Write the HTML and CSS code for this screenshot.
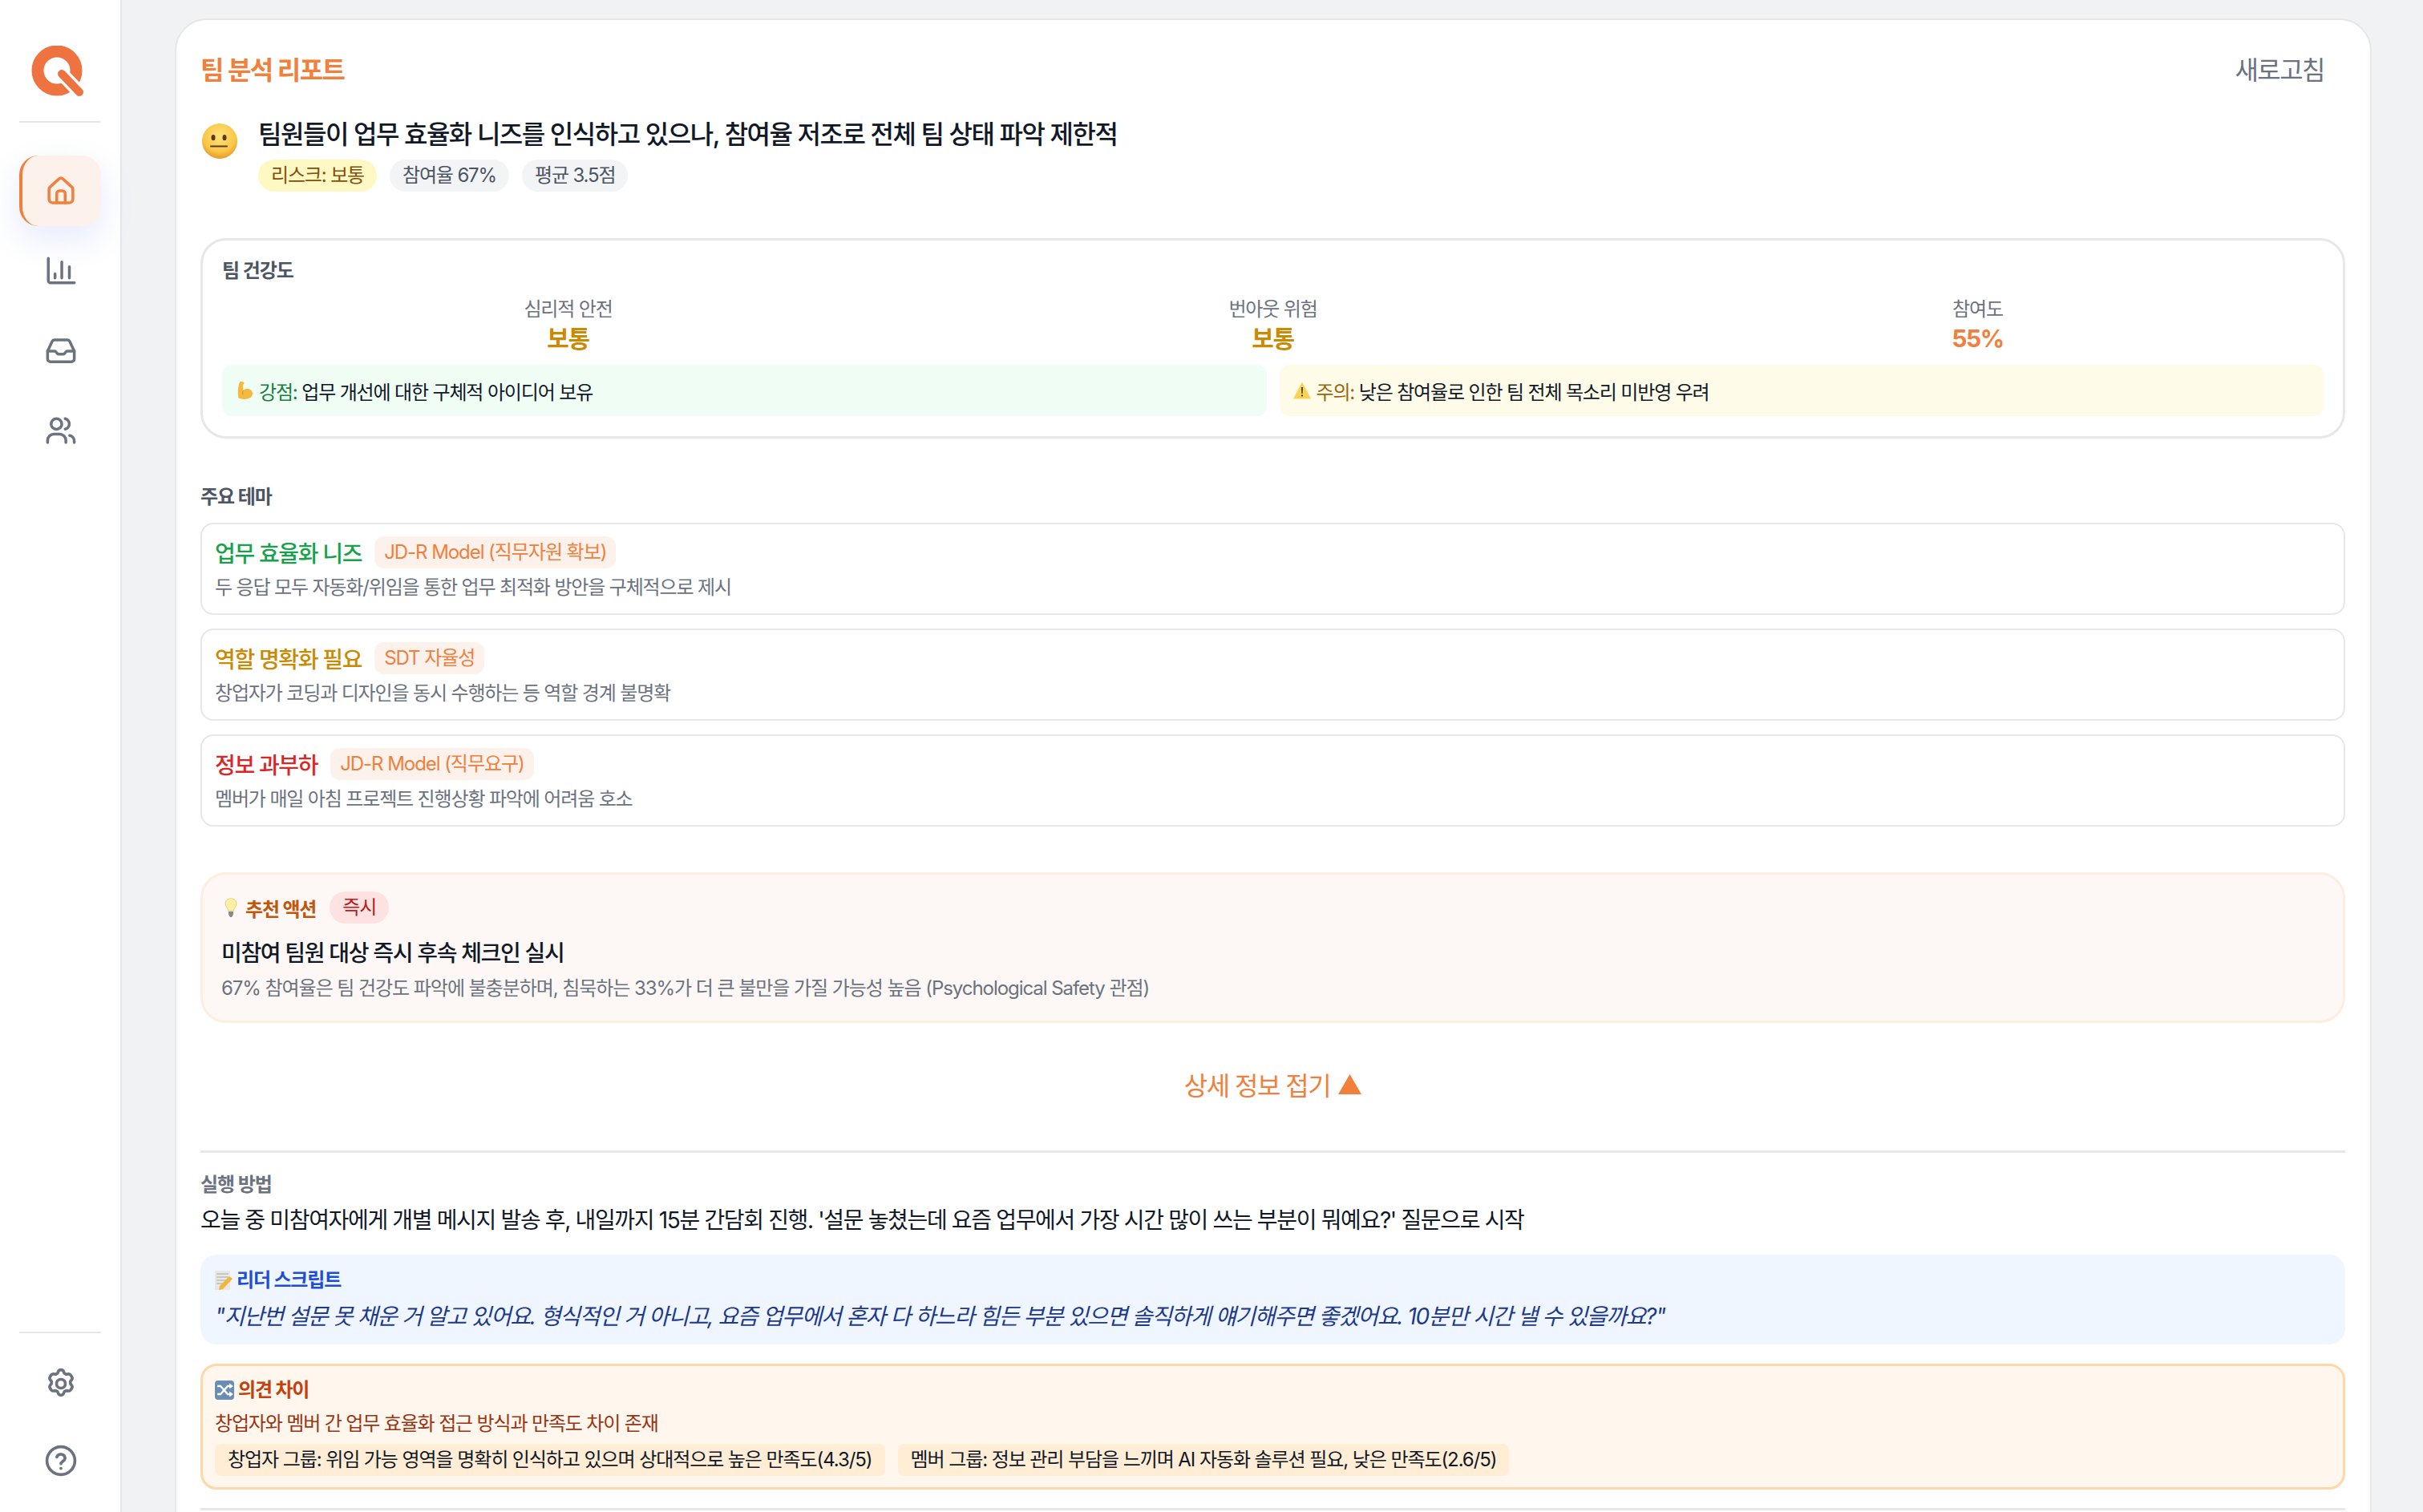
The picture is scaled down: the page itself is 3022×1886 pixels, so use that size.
FILE: index.html
```html
<!DOCTYPE html>
<html lang="ko">
<head>
    <meta charset="UTF-8">
    <meta name="viewport" content="width=device-width, initial-scale=1.0">
    <title>팀 분석 리포트</title>
    <link rel="stylesheet" href="styles.css">
</head>
<body>
    <aside class="sidebar">
        <div class="logo">
            <svg viewBox="0 0 66 64" width="66" height="64">
                <circle cx="32" cy="31" r="24" fill="none" stroke="#ef7340" stroke-width="15"/>
                <path d="M39 36 60 58" stroke="#fff" stroke-width="17" stroke-linecap="butt"/>
                <path d="M38 35 60 58" stroke="#ef7340" stroke-width="10" stroke-linecap="round"/>
            </svg>
        </div>
        <div class="side-line"></div>
        <nav class="side-nav">
            <a class="nav-item active">
                <svg viewBox="0 0 24 24" class="icon"><path d="M4 9.500 10.600 3.500a2 2 0 0 1 2.800 0L20 9.500a2 2 0 0 1 .5 1.400V18a2.500 2.500 0 0 1-2.500 2.500H6A2.500 2.500 0 0 1 3.500 18v-7.100a2 2 0 0 1 .5-1.400Z"/><path d="M9 20.500V14a2 2 0 0 1 2-2h2a2 2 0 0 1 2 2v6.500"/></svg>
            </a>
            <a class="nav-item">
                <svg viewBox="0 0 24 24" class="icon"><path d="M3 3V18.900a1.500 1.500 0 0 0 1.500 1.500H21.600"/><path d="M7.800 14V17M12.600 5.500V17M18 9V17"/></svg>
            </a>
            <a class="nav-item">
                <svg viewBox="0 0 24 24" class="icon"><path d="M7.500 4h9a2 2 0 0 1 1.800 1.100L21.500 12v5.500a2 2 0 0 1-2 2h-15a2 2 0 0 1-2-2V12l3.200-6.900a2 2 0 0 1 1.800-1.100Z"/><path d="M2.500 12h5a1 1 0 0 1 .8.400l1.200 1.400a1 1 0 0 0 .8.400h3.400a1 1 0 0 0 .8-.4l1.200-1.400a1 1 0 0 1 .8-.4h5"/></svg>
            </a>
            <a class="nav-item">
                <svg viewBox="0 0 24 24" class="icon"><circle cx="8.800" cy="6.800" r="3.800"/><path d="M2.500 20V18.500a4.500 4.500 0 0 1 4.500-4.500h4a4.500 4.500 0 0 1 4.500 4.500V20"/><path d="M15 3a3.800 3.800 0 0 1 0 7.400"/><path d="M18.200 15a4 4 0 0 1 3.300 4V20"/></svg>
            </a>
        </nav>
        <div class="side-bottom">
            <div class="side-line"></div>
            <a class="nav-sm">
                <svg viewBox="0 0 24 24" class="icon"><path d="M12 2.500c.8 0 1.500.5 1.800 1.200l.5 1.200 1.300.7 1.300-.2c.8-.1 1.500.2 1.900.9l.6 1c.4.700.3 1.500-.2 2.100l-.8 1v1.500l.8 1c.5.600.6 1.400.2 2.100l-.6 1c-.4.700-1.100 1-1.900.9l-1.300-.2-1.300.7-.5 1.200c-.3.700-1 1.200-1.800 1.200s-1.500-.5-1.800-1.200l-.5-1.200-1.300-.7-1.300.2c-.8.1-1.500-.2-1.900-.9l-.6-1c-.4-.7-.3-1.500.2-2.100l.8-1v-1.500l-.8-1c-.5-.6-.6-1.400-.2-2.100l.6-1c.4-.7 1.100-1 1.900-.9l1.300.2 1.300-.7.5-1.200c.3-.7 1-1.200 1.800-1.200Z"/><circle cx="12" cy="12" r="3"/></svg>
            </a>
            <a class="nav-sm">
                <svg viewBox="0 0 24 24" class="icon"><circle cx="12" cy="12" r="9.500"/><path d="M9.200 9.500a2.900 2.900 0 0 1 5.600.8c0 1.900-2.800 2.400-2.800 3.700"/><path d="M12 17.200v.1"/></svg>
            </a>
        </div>
    </aside>

    <main class="main">
        <section class="card">
            <header class="card-head">
                <h1 class="page-title">팀 분석 리포트</h1>
                <button class="refresh">새로고침</button>
            </header>

            <div class="summary">
                <svg class="emoji-big" viewBox="0 0 44 44">
                    <defs>
                        <radialGradient id="face" cx="50%" cy="35%" r="65%">
                            <stop offset="0" stop-color="#ffe27a"/>
                            <stop offset="0.7" stop-color="#f8c746"/>
                            <stop offset="1" stop-color="#e59a28"/>
                        </radialGradient>
                    </defs>
                    <circle cx="22" cy="22" r="22" fill="url(#face)"/>
                    <ellipse cx="14" cy="17.700" rx="2.500" ry="3.600" fill="#5b3a1c"/>
                    <ellipse cx="28" cy="17.700" rx="2.500" ry="3.600" fill="#5b3a1c"/>
                    <rect x="10" y="27.500" width="22" height="2" rx="1" fill="#5b3a1c"/>
                </svg>
                <div class="summary-body">
                    <h2 class="headline">팀원들이 업무 효율화 니즈를 인식하고 있으나, 참여율 저조로 전체 팀 상태 파악 제한적</h2>
                    <div class="chips">
                        <span class="chip chip-risk">리스크: 보통</span>
                        <span class="chip">참여율 67%</span>
                        <span class="chip">평균 3.5점</span>
                    </div>
                </div>
            </div>

            <section class="health">
                <h3 class="health-title">팀 건강도</h3>
                <div class="stats">
                    <div class="stat"><div class="stat-label">심리적 안전</div><div class="stat-value yellow">보통</div></div>
                    <div class="stat"><div class="stat-label">번아웃 위험</div><div class="stat-value yellow">보통</div></div>
                    <div class="stat"><div class="stat-label">참여도</div><div class="stat-value orange">55%</div></div>
                </div>
                <div class="notes">
                    <div class="note note-good">
                        <svg class="emoji" viewBox="0 0 24 24"><path fill="#f4b93f" d="M6 1.500C8 .5 11 1 11.500 3L10 5.500 10.500 12C13 9.500 17 9.500 20 11.500 23 14 22.500 19 19.500 21 15 23.500 8 23.500 4.500 21.500 3 15 3.500 8 6 1.500Z"/><path fill="none" stroke="#d6902a" stroke-width="1" d="M10.500 12C9.500 14 9.500 16 10 17.500"/></svg>
                        <span><b>강점:</b> 업무 개선에 대한 구체적 아이디어 보유</span>
                    </div>
                    <div class="note note-warn">
                        <svg class="emoji" viewBox="0 0 24 24"><path fill="#fbd354" d="M12 1.500 23 22.500H1Z"/><path fill="#3b3b3b" d="M11 8h2l-.4 8h-1.200ZM11 17.500h2v2h-2Z"/></svg>
                        <span><b>주의:</b> 낮은 참여율로 인한 팀 전체 목소리 미반영 우려</span>
                    </div>
                </div>
            </section>

            <h3 class="section-label">주요 테마</h3>
            <div class="themes">
                <article class="theme">
                    <div class="theme-head"><span class="theme-name green">업무 효율화 니즈</span><span class="tag">JD-R Model (직무자원 확보)</span></div>
                    <p class="theme-desc">두 응답 모두 자동화/위임을 통한 업무 최적화 방안을 구체적으로 제시</p>
                </article>
                <article class="theme">
                    <div class="theme-head"><span class="theme-name yellow">역할 명확화 필요</span><span class="tag">SDT 자율성</span></div>
                    <p class="theme-desc">창업자가 코딩과 디자인을 동시 수행하는 등 역할 경계 불명확</p>
                </article>
                <article class="theme">
                    <div class="theme-head"><span class="theme-name red">정보 과부하</span><span class="tag">JD-R Model (직무요구)</span></div>
                    <p class="theme-desc">멤버가 매일 아침 프로젝트 진행상황 파악에 어려움 호소</p>
                </article>
            </div>

            <section class="action">
                <div class="action-head">
                    <svg class="emoji bulb" viewBox="0 0 16 24"><path fill="#fdf0a6" stroke="#e9cf72" d="M8 .7c4 0 7 3 7 6.500 0 3.500-3 5-4 9H5C4 12.200 1 10.700 1 7.200 1 3.700 4 .7 8 .7Z"/><path fill="#8a8a8a" d="M5 17h6v3.500L9 24H7l-2-3.500Z"/></svg>
                    <span class="action-label">추천 액션</span>
                    <span class="badge">즉시</span>
                </div>
                <h4 class="action-title">미참여 팀원 대상 즉시 후속 체크인 실시</h4>
                <p class="action-desc">67% 참여율은 팀 건강도 파악에 불충분하며, 침묵하는 33%가 더 큰 불만을 가질 가능성 높음 (Psychological Safety 관점)</p>
            </section>

            <button class="toggle">상세 정보 접기 <svg class="caret" viewBox="0 0 29 25"><path fill="#f0803c" d="M14.500 0 29 25H0Z"/></svg></button>

            <hr class="rule">

            <h3 class="how-label">실행 방법</h3>
            <p class="how-text">오늘 중 미참여자에게 개별 메시지 발송 후, 내일까지 15분 간담회 진행. '설문 놓쳤는데 요즘 업무에서 가장 시간 많이 쓰는 부분이 뭐예요?' 질문으로 시작</p>

            <section class="script">
                <div class="box-head blue">
                    <svg class="emoji memo" viewBox="0 0 22 24"><rect x="0" y="0" width="19" height="24" fill="#e8e8e4"/><path stroke="#a9a9a4" stroke-width="1" d="M2 4h15M2 8h15M2 12h12M2 16h8"/><path fill="#f2b63c" d="M18 7 22 10 10 23 5 24 6 19Z"/></svg>
                    리더 스크립트
                </div>
                <p class="script-quote">"지난번 설문 못 채운 거 알고 있어요. 형식적인 거 아니고, 요즘 업무에서 혼자 다 하느라 힘든 부분 있으면 솔직하게 얘기해주면 좋겠어요. 10분만 시간 낼 수 있을까요?"</p>
            </section>

            <section class="gap">
                <div class="box-head brown">
                    <svg class="emoji" viewBox="0 0 24 24"><rect width="24" height="24" rx="4" fill="#6a8db5"/><path fill="none" stroke="#fff" stroke-width="2.400" d="M3 7h4l9 10h3M3 17h4l9-10h3"/><path fill="#fff" d="M18 3.500 23 7l-5 3.500ZM18 13.500 23 17l-5 3.500Z"/></svg>
                    의견 차이
                </div>
                <p class="gap-desc">창업자와 멤버 간 업무 효율화 접근 방식과 만족도 차이 존재</p>
                <div class="gap-groups">
                    <span class="group">창업자 그룹: 위임 가능 영역을 명확히 인식하고 있으며 상대적으로 높은 만족도(4.3/5)</span>
                    <span class="group">멤버 그룹: 정보 관리 부담을 느끼며 AI 자동화 솔루션 필요, 낮은 만족도(2.6/5)</span>
                </div>
            </section>

            <hr class="rule rule-end">
        </section>
    </main>
</body>
</html>
```

FILE: styles.css
```css
* {
    box-sizing: border-box;
    letter-spacing: -0.048em;
}

html, body {
    height: 100%;
}

body {
    margin: 0;
    display: flex;
    height: 1886px;
    overflow: hidden;
    background: #f1f2f4;
    color: #111827;
    font-family: Inter, "Noto Sans CJK KR", "Noto Sans", sans-serif;
}

h1, h2, h3, h4, p {
    margin: 0;
}

/* sidebar */
.sidebar {
    width: 152px;
    flex-shrink: 0;
    background: #fff;
    border-right: 2px solid #e5e7eb;
    display: flex;
    flex-direction: column;
    align-items: center;
    padding: 57px 0 16px;
}

.logo {
    height: 62px;
    width: 102px;
    padding-left: 15px;
}

.side-line {
    width: 102px;
    height: 2px;
    background: #e5e7eb;
}

.logo + .side-line {
    margin-top: 32px;
}

.side-nav {
    margin-top: 41px;
    display: flex;
    flex-direction: column;
    gap: 12px;
}

.nav-item {
    width: 102px;
    height: 88px;
    display: flex;
    align-items: center;
    justify-content: center;
    border-radius: 24px;
    color: #6b7280;
}

.nav-item.active {
    background: #fdf1ec;
    color: #f0803c;
    border-left: 4px solid #f0803c;
    padding-right: 4px;
    box-shadow: 0 16px 40px rgba(99, 125, 240, 0.16);
}

.icon {
    width: 42px;
    height: 42px;
    margin-left: 2px;
    fill: none;
    stroke: currentColor;
    stroke-width: 2;
    stroke-linecap: round;
    stroke-linejoin: round;
}

.side-bottom {
    margin-top: auto;
    display: flex;
    flex-direction: column;
    align-items: center;
}

.nav-sm {
    width: 102px;
    height: 96px;
    display: flex;
    align-items: center;
    justify-content: center;
    color: #6b7280;
}

.nav-sm .icon {
    width: 44px;
    height: 44px;
}

.side-bottom .side-line {
    margin-bottom: 15px;
}

/* main card */
.main {
    flex: 1;
    padding: 23px 64px 0 66px;
    min-width: 0;
}

.card {
    background: #fff;
    border: 2px solid #e5e7eb;
    border-radius: 40px;
    padding: 0 31px 0 30px;
    height: 2000px;
}

.card-head {
    display: flex;
    justify-content: space-between;
    align-items: center;
    height: 72px;
    margin-top: 24px;
}

.page-title {
    font-size: 32px;
    font-weight: 700;
    color: #f0803c;
}

.refresh {
    background: none;
    border: none;
    font: inherit;
    font-size: 32px;
    color: #6b7280;
    padding: 0 26px 0 0;
}

.summary {
    display: flex;
    gap: 26px;
    margin-top: 25px;
}

.emoji-big {
    width: 44px;
    height: 44px;
    margin: 8px 0 0 2px;
    flex-shrink: 0;
}

.summary-body {
    display: flex;
    flex-direction: column;
}

.headline {
    font-size: 32px;
    line-height: 44px;
    font-weight: 500;
    letter-spacing: -0.046em;
}

.chips {
    display: flex;
    gap: 16px;
    margin-top: 9px;
}

.chip {
    height: 40px;
    line-height: 40px;
    padding: 0 16px;
    border-radius: 20px;
    background: #f3f4f6;
    color: #4b5563;
    font-size: 24px;
}

.chip-risk {
    background: #fef9c3;
    color: #854d0e;
}

/* health */
.health {
    margin-top: 58px;
    border: 3px solid #e5e7eb;
    border-radius: 32px;
    padding: 22px 24px 22px;
    height: 250px;
}

.health-title {
    font-size: 24px;
    line-height: 32px;
    font-weight: 600;
    color: #4b5563;
}

.stats {
    display: grid;
    grid-template-columns: repeat(3, 1fr);
    gap: 16px;
    margin-top: 16px;
    text-align: center;
}

.stat-label {
    font-size: 24px;
    line-height: 32px;
    color: #6b7280;
}

.stat-value {
    font-size: 30px;
    line-height: 40px;
    font-weight: 700;
}

.yellow {
    color: #ca8a04;
}

.orange {
    color: #f0803c;
}

.green {
    color: #16a34a;
}

.red {
    color: #dc2626;
}

.notes {
    display: grid;
    grid-template-columns: 1fr 1fr;
    gap: 16px;
    margin-top: 13px;
}

.note {
    height: 64px;
    display: flex;
    align-items: center;
    gap: 6px;
    padding: 0 16px;
    border-radius: 12px;
    font-size: 24px;
}

.note b {
    font-weight: 400;
}

.note-good {
    background: #f0fdf4;
}

.note-good b {
    color: #15803d;
}

.note-warn {
    background: #fefce8;
}

.note-warn b {
    color: #a16207;
}

.emoji {
    width: 24px;
    height: 24px;
    flex-shrink: 0;
}

/* themes */
.section-label {
    font-size: 24px;
    line-height: 32px;
    font-weight: 600;
    color: #4b5563;
    margin-top: 57px;
}

.themes {
    display: flex;
    flex-direction: column;
    gap: 17px;
    margin-top: 16px;
}

.theme {
    height: 115px;
    border: 2px solid #e5e7eb;
    border-radius: 16px;
    padding: 15px 16px 0;
}

.theme-head {
    display: flex;
    align-items: center;
    gap: 16px;
}

.theme-name {
    font-size: 28px;
    font-weight: 500;
}

.tag {
    height: 40px;
    line-height: 40px;
    padding: 0 12px;
    border-radius: 12px;
    background: #fdf1ec;
    color: #f0803c;
    font-size: 24px;
    letter-spacing: -0.044em;
}

.theme-desc {
    margin-top: 8px;
    font-size: 24px;
    line-height: 32px;
    color: #6b7280;
}

/* action */
.action {
    margin-top: 57px;
    height: 188px;
    background: #fdf8f5;
    border: 3px solid #fdeee0;
    border-radius: 32px;
    padding: 21px 23px 0;
}

.action-head {
    display: flex;
    align-items: center;
    gap: 10px;
    height: 40px;
}

.bulb {
    width: 16px;
    height: 24px;
    margin-left: 4px;
}

.action-label {
    font-size: 24px;
    font-weight: 700;
    color: #c2570c;
}

.badge {
    height: 40px;
    line-height: 40px;
    padding: 0 16px;
    margin-left: 7px;
    border-radius: 20px;
    background: #fee2e2;
    color: #b91c1c;
    font-size: 24px;
}

.action-title {
    margin-top: 17px;
    font-size: 28px;
    line-height: 40px;
    font-weight: 500;
}

.action-desc {
    margin-top: 8px;
    font-size: 24px;
    line-height: 32px;
    color: #6b7280;
    letter-spacing: -0.044em;
}

/* toggle */
.toggle {
    display: flex;
    align-items: center;
    justify-content: center;
    gap: 10px;
    width: 100%;
    height: 48px;
    margin-top: 52px;
    background: none;
    border: none;
    font: inherit;
    font-size: 32px;
    color: #f0803c;
}

.caret {
    width: 29px;
    height: 25px;
}

.rule {
    border: none;
    height: 3px;
    background: #e5e7eb;
    margin: 59px 0 0;
}

.how-label {
    margin-top: 24px;
    font-size: 24px;
    line-height: 32px;
    font-weight: 600;
    color: #6b7280;
}

.how-text {
    margin-top: 8px;
    font-size: 28px;
    line-height: 40px;
}

/* script box */
.script {
    margin-top: 23px;
    height: 112px;
    background: #eff6ff;
    border-radius: 20px;
    padding: 16px 18px 0;
}

.box-head {
    display: flex;
    align-items: center;
    gap: 5px;
    font-size: 24px;
    line-height: 32px;
    font-weight: 700;
}

.memo {
    width: 22px;
}

.blue {
    color: #1d4ed8;
}

.brown {
    color: #c2410c;
}

.script-quote {
    margin-top: 9px;
    font-size: 28px;
    line-height: 40px;
    font-style: italic;
    color: #1e3a8a;
}

/* opinion gap */
.gap {
    margin-top: 24px;
    height: 157px;
    background: #fff7ed;
    border: 3px solid #fed7aa;
    border-radius: 20px;
    padding: 14px 15px 0;
}

.gap-desc {
    margin-top: 10px;
    font-size: 24px;
    line-height: 32px;
    color: #9a3412;
}

.gap-groups {
    display: flex;
    gap: 16px;
    margin-top: 9px;
}

.group {
    height: 40px;
    line-height: 40px;
    padding: 0 16px;
    border-radius: 8px;
    background: #ffedd5;
    font-size: 24px;
    letter-spacing: -0.045em;
}

.rule-end {
    margin-top: 23px;
}
```
